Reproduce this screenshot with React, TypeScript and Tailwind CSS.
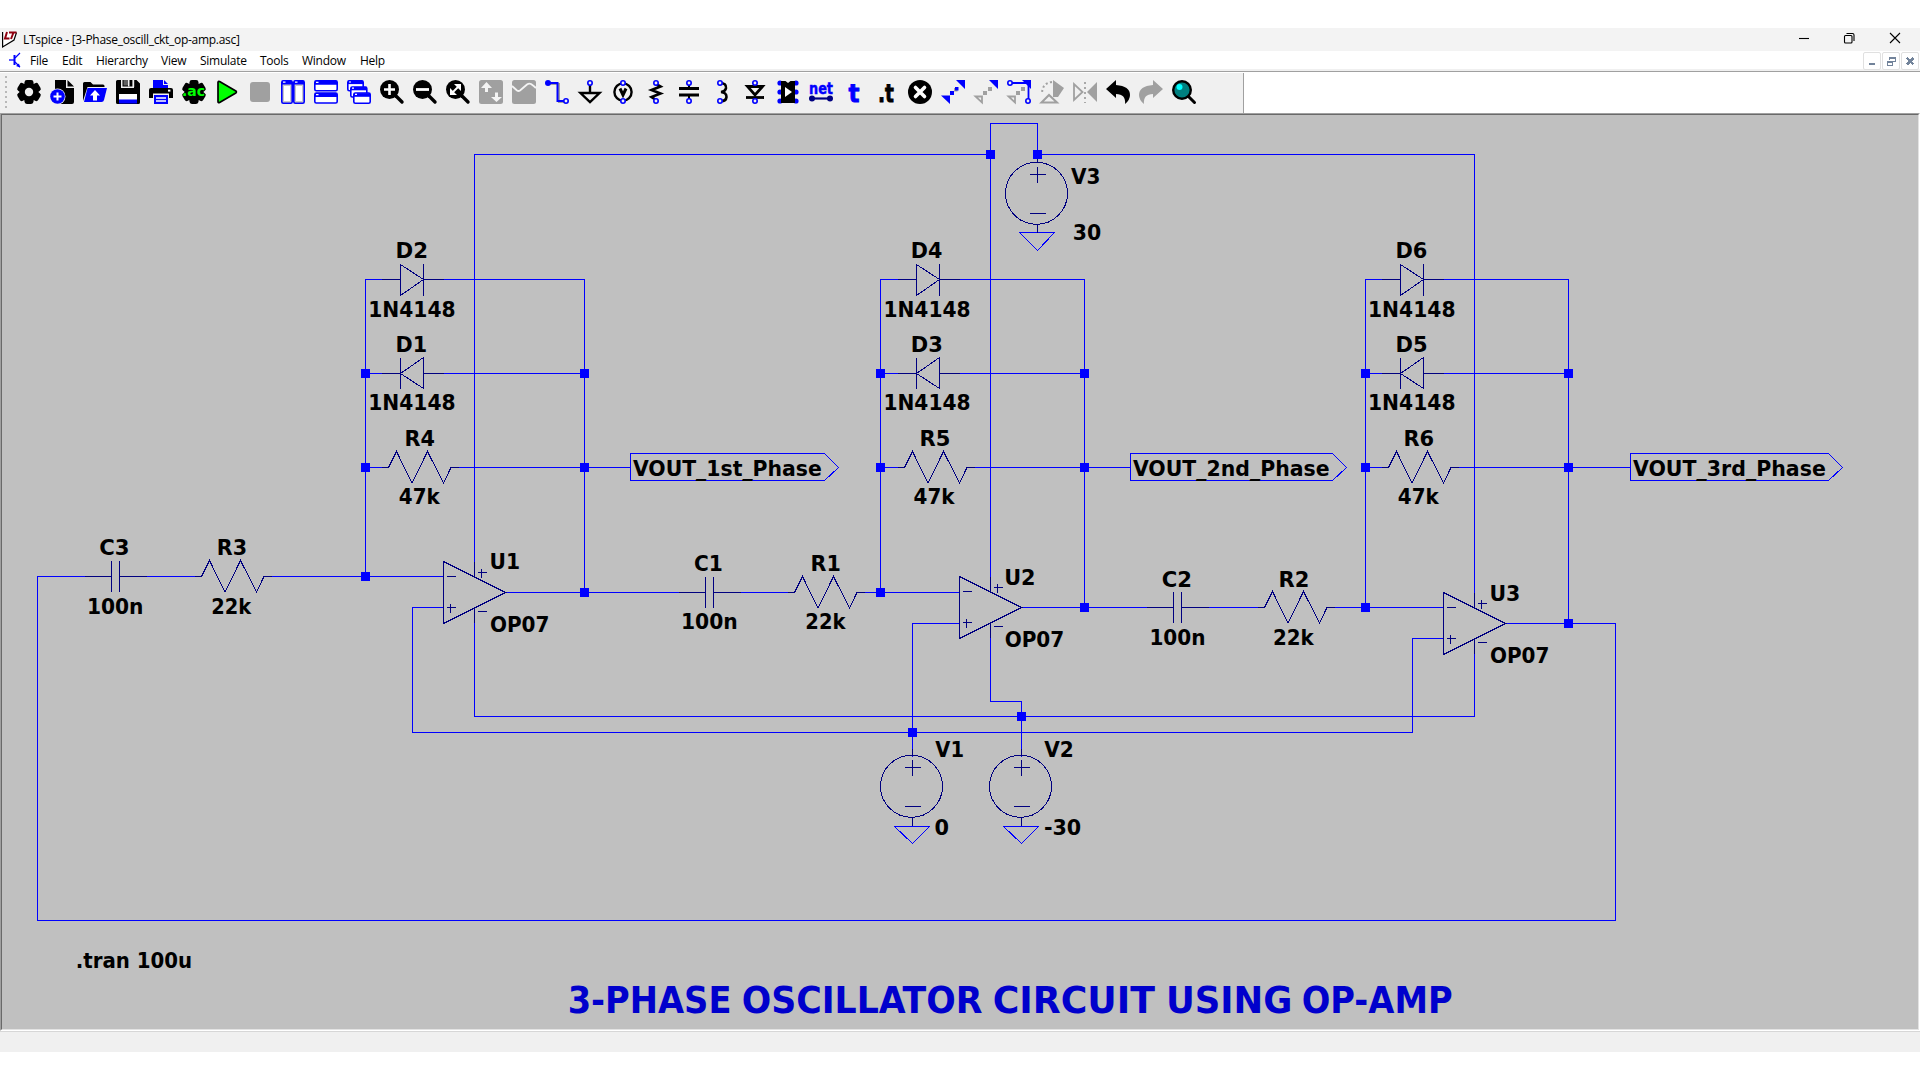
import React from "react";

const WIRE = "#0000ff";
const PART = "#000080";
const GREY = "#a0a0a0";

/* ---------- toolbar icons, each on a 24 x 24 grid ---------- */

const Gear = ({ hole = true }: { hole?: boolean }) => (
  <g>
    <g fill="#000">
      <circle cx="12" cy="12" r="9.6" />
      {[0, 60, 120].map((a) => (
        <rect key={a} x="7.5" y="0" width="9" height="24" rx="2.4" transform={`rotate(${a} 12 12)`} />
      ))}
    </g>
    {hole && <circle cx="12" cy="12" r="4.2" fill="#f0f0f0" />}
  </g>
);

const Lens = ({ children }: { children?: React.ReactNode }) => (
  <g>
    <path d="M16 16 L22 22" stroke="#000" strokeWidth="3.4" strokeLinecap="round" />
    <circle cx="9.5" cy="9.5" r="9.5" fill="#000" />
    {children}
  </g>
);

const Pin = ({ x, y }: { x: number; y: number }) => (
  <circle cx={x} cy={y} r="2.2" fill="#f0f0f0" stroke="#0000ff" strokeWidth="1.6" />
);

const icons: React.ReactNode[] = [
  <Gear />,
  <g>
    <path d="M5 0 H16 V8 H24 V22 Q24 24 22 24 H5 Z" fill="#000" />
    <path d="M17.5 0 L24 6.5 H17.5 Z" fill="#000" />
    <circle cx="7.5" cy="16.5" r="8" fill="#f0f0f0" />
    <circle cx="7.5" cy="16.5" r="7.3" fill="#0000ff" />
    <path d="M7.5 12.5 V20.5 M3.5 16.5 H11.5" stroke="#fff" strokeWidth="2" />
  </g>,
  <g>
    <path d="M0 21 V3.5 Q0 2 1.5 2 H7.5 L10 4.5 H20 Q21.5 4.5 21.5 6 V7 H4.5 Z" fill="#000" />
    <path d="M4.5 8 H24 L21 20 Q20.6 22 18.5 22 H1 Z" fill="#0000ff" />
    <path d="M12 10 L17 15.5 H14 V20.5 H10 V15.5 H7 Z" fill="#fff" />
  </g>,
  <g>
    <path d="M1.5 0 H5 V8 H18 V0 H20.5 L24 3.5 V22.5 Q24 24 22.5 24 H1.5 Q0 24 0 22.5 V1.5 Q0 0 1.5 0 Z" fill="#000" />
    <path d="M6.5 0 H16.5 V6.5 H6.5 Z" fill="#000" />
    <path d="M7.5 0 H12 V5.5 H7.5 Z" fill="#606060" />
    <rect x="12" y="0" width="1.5" height="6.5" fill="#f0f0f0" />
    <rect x="16.8" y="0" width="1.4" height="7" fill="#f0f0f0" />
    <rect x="3" y="14" width="18" height="6" fill="#fff" />
    <rect x="3" y="19.5" width="18" height="4" fill="#0000ff" />
  </g>,
  <g>
    <path d="M4 0 H14 V5 H19 V8 H4 Z" fill="#0000ff" />
    <path d="M15 0 L19 4 H15 Z" fill="#0000ff" />
    <path d="M2 8 H22 Q24 8 24 10 V18 H0 V10 Q0 8 2 8 Z" fill="#000" />
    <rect x="19" y="9.6" width="2.4" height="2" fill="#fff" />
    <rect x="4" y="13.5" width="16" height="10.5" fill="#f0f0f0" />
    <rect x="5" y="15" width="14" height="9" fill="#0000ff" />
    <path d="M7 18 H17 M7 21 H17" stroke="#fff" strokeWidth="1.3" />
  </g>,
  <g>
    <Gear hole={false} />
    <text x="0" y="16.3" fontSize="14" fontWeight="700" fill="#00ff00" textLength="23" lengthAdjust="spacingAndGlyphs">
      .ac
    </text>
  </g>,
  <path d="M3 2.5 V21.5 Q3 23.2 4.6 22.4 L20.8 13 Q22 12 20.8 11 L4.6 1.6 Q3 .8 3 2.5 Z" fill="#00ff00" stroke="#000" strokeWidth="1.7" />,
  <rect x="2" y="2" width="20" height="20" rx="3" fill={GREY} />,
  <g fill="#c8c8c8" stroke="#0000ff" strokeWidth="1.6">
    <rect x=".8" y=".8" width="10.4" height="22.4" rx="1.5" />
    <rect x="12.8" y=".8" width="10.4" height="22.4" rx="1.5" />
    <path d="M1 2.6 H11 M13 2.6 H23" strokeWidth="3.6" />
    <path d="M2 2.2 H4.5 M14 2.2 H16.5" stroke="#fff" strokeWidth="1.2" />
    <path d="M3 6 H9 V21 H3 Z M15 6 H21 V21 H15 Z" fill="#fff" stroke="none" />
  </g>,
  <g fill="#fff" stroke="#0000ff" strokeWidth="1.6">
    <rect x=".8" y=".8" width="22.4" height="10" rx="1.5" />
    <rect x=".8" y="13" width="22.4" height="10" rx="1.5" />
    <path d="M1 2.8 H23 M1 15 H23" strokeWidth="4" />
    <path d="M2 2.4 H4.5 M2 14.6 H4.5" stroke="#fff" strokeWidth="1.2" />
  </g>,
  <g fill="#fff" stroke="#0000ff" strokeWidth="1.6">
    <rect x=".8" y=".8" width="15.4" height="10" rx="1.5" />
    <path d="M1 2.4 H16" strokeWidth="3.4" />
    <rect x="3.8" y="7" width="16" height="10" rx="1.5" />
    <path d="M4 8.6 H20" strokeWidth="3.4" />
    <rect x="6.8" y="13" width="16.4" height="10.2" rx="1.5" />
    <path d="M7 15 H23" strokeWidth="3.6" />
    <path d="M2 2 H4 M5 8.2 H7 M8 14.4 H10" stroke="#fff" strokeWidth="1.2" />
  </g>,
  <Lens>
    <path d="M9.5 4 V15 M4 9.5 H15" stroke="#fff" strokeWidth="2.6" />
  </Lens>,
  <Lens>
    <path d="M3 9.5 H16" stroke="#fff" strokeWidth="2.8" />
  </Lens>,
  <Lens>
    <path d="M8 4 H15 V11 Z M4 8 V15 H11 Z" fill="#fff" />
    <path d="M6 13 L13 6" stroke="#fff" strokeWidth="2" />
  </Lens>,
  <g>
    <rect width="24" height="24" rx="2.5" fill={GREY} />
    <path d="M7.5 2 L13 8 H9 V12 H6 V8 H2 Z M17.5 22 L12 17 H16 V12.5 H19 V17 H23 Z" fill="#f4f4f4" />
  </g>,
  <g>
    <rect width="24" height="24" rx="2.5" fill={GREY} />
    <path d="M0 6 L5 10.5 Q6.500 11.500 8 10.500 L15 4.500 Q17 3 19 4 Q22 6 24 8" fill="none" stroke="#f4f4f4" strokeWidth="1.8" />
  </g>,
  <g>
    <path d="M3 4 H14 V22 H20" fill="none" stroke={GREY} strokeWidth="2" />
    <path d="M3 3 H12.500 V21 H20" fill="none" stroke="#0000ff" strokeWidth="2" />
    <circle cx="3" cy="3" r="3" fill="#0000ff" />
    <Pin x={21} y={21} />
  </g>,
  <g>
    <path d="M12 5 V13" stroke="#000" strokeWidth="2.4" />
    <path d="M2.500 13 H21.500 L12 22 Z" fill="#f0f0f0" stroke="#000" strokeWidth="2.4" />
    <Pin x={12} y={3} />
  </g>,
  <g>
    <circle cx="12" cy="12" r="8.600" fill="none" stroke="#000" strokeWidth="2.4" />
    <path d="M9 8.500 L12 15 L15 8.500" fill="none" stroke="#000" strokeWidth="3" />
    <Pin x={12} y={3} />
    <Pin x={12} y={21} />
  </g>,
  <g>
    <path d="M12 4 L16.500 6.500 L7.500 10 L16.500 13.500 L7.500 17 L12 20" fill="none" stroke="#000" strokeWidth="2.600" />
    <Pin x={12} y={3} />
    <Pin x={12} y={21} />
  </g>,
  <g>
    <path d="M2 8.500 H22 M2 15 H22" stroke="#000" strokeWidth="2.800" />
    <path d="M12 4 V8 M12 16 V20" stroke="#000" strokeWidth="2" />
    <Pin x={12} y={3} />
    <Pin x={12} y={21} />
  </g>,
  <g>
    <path d="M10 3 Q16.500 3 16 8 Q15.500 11.500 11 12 Q16.500 12.500 16.500 17 Q16 21.500 10 21" fill="none" stroke="#000" strokeWidth="2.600" />
    <Pin x={10} y={3} />
    <Pin x={10} y={21} />
  </g>,
  <g>
    <path d="M4.500 6.500 H19.500 L12 15 Z" fill="#f0f0f0" stroke="#000" strokeWidth="2.800" />
    <path d="M3 17.500 H21" stroke="#000" strokeWidth="2.800" />
    <Pin x={12} y={3} />
    <Pin x={12} y={21} />
  </g>,
  <g>
    <g fill="#0000ff">
      <circle cx="4" cy="3" r="2.600" />
      <circle cx="4" cy="12" r="2.600" />
      <circle cx="4" cy="21" r="2.600" />
      <circle cx="20" cy="3" r="2.600" />
      <circle cx="20" cy="12" r="2.600" />
      <circle cx="20" cy="21" r="2.600" />
    </g>
    <path d="M5 1 H9.500 L12 3 L14.500 1 H19 V23 H5 Z" fill="#000" />
    <path d="M9 7 L16 12 L9 17 Z" fill="#fff" />
  </g>,
  <g>
    <text x="0" y="14" fontSize="16" fontWeight="700" fill="#0000ff" stroke="#0000ff" strokeWidth=".5" textLength="24" lengthAdjust="spacingAndGlyphs">
      net
    </text>
    <path d="M3 18.500 H21" stroke="#000080" strokeWidth="2.200" />
    <circle cx="3" cy="18.500" r="3" fill="#000080" />
    <circle cx="21" cy="18.500" r="3" fill="#000080" />
  </g>,
  <text x="6.500" y="21.500" fontSize="25" fontWeight="700" fill="#0000ff" stroke="#0000ff" strokeWidth=".8" textLength="11" lengthAdjust="spacingAndGlyphs">
    t
  </text>,
  <text x="3" y="21.500" fontSize="25" fontWeight="700" fill="#000" stroke="#000" strokeWidth=".8" textLength="16" lengthAdjust="spacingAndGlyphs">
    .t
  </text>,
  <g>
    <circle cx="12" cy="12" r="12" fill="#000" />
    <path d="M7.500 7.500 L16.500 16.500 M16.500 7.500 L7.500 16.500" stroke="#fff" strokeWidth="3.600" strokeLinecap="round" />
  </g>,
  <g fill="#0000ff">
    <path d="M15 0 H24 V9 Z M0 15.500 H9 V24 Z" />
    <rect x="9" y="11" width="4" height="4" />
    <rect x="13" y="8" width="3.500" height="3.500" fill={GREY} />
    <rect x="14" y="7" width="3.500" height="3.500" />
  </g>,
  <g>
    <path d="M15 0 H24 V9 Z" fill="#0000ff" />
    <path d="M1.500 16.500 H8 V22.500 Z" fill="none" stroke={GREY} strokeWidth="1.800" />
    <path d="M9 11 h4 v4 h-4 Z M14 7 h4 v4 h-4 Z" fill={GREY} />
  </g>,
  <g>
    <path d="M15 0 H24 V9 Z" fill="#0000ff" />
    <path d="M4 3 H20 M21.500 4 V20" stroke="#0000ff" strokeWidth="1.800" />
    <path d="M1.500 16.500 H8 V22.500 Z" fill="none" stroke={GREY} strokeWidth="1.800" />
    <path d="M9 11 h4 v4 h-4 Z M14 7 h4 v4 h-4 Z" fill={GREY} />
    <Pin x={3} y={3} />
    <Pin x={21} y={21} />
  </g>,
  <g>
    <path d="M13 0 L24 8 L18 17 H13 Z" fill={GREY} />
    <path d="M12 2 Q2 3 2 14" fill="none" stroke={GREY} strokeWidth="2" strokeDasharray="2 2.500" />
    <path d="M1.500 22.500 L9 15 L17 22.500 Z" fill="#f0f0f0" stroke={GREY} strokeWidth="2" />
  </g>,
  <g>
    <path d="M1 4 V20 L9.500 12 Z" fill="none" stroke={GREY} strokeWidth="1.800" />
    <path d="M24 2 V22 L14 12 Z" fill={GREY} />
    <path d="M12 2 V23" stroke={GREY} strokeWidth="1.800" strokeDasharray="2 3" />
  </g>,
  <path d="M0 9 L10 0 V5 Q24 6 24 15 Q24 20 19 24 Q20 14 10 14 V18 Z" fill="#000" />,
  <path d="M24 9 L14 0 V5 Q0 6 0 15 Q0 20 5 24 Q4 14 14 14 V18 Z" fill={GREY} />,
  <g>
    <path d="M16 16 L22.500 22.500" stroke="#000" strokeWidth="3" strokeLinecap="round" />
    <circle cx="10" cy="10" r="8.800" fill="#008080" stroke="#000" strokeWidth="2.400" />
    <circle cx="7.500" cy="7" r="3" fill="#00ffff" />
  </g>,
];

/* ---------- schematic ---------- */

// Side bearings of the glyphs that begin or end a label, in em.
const LEFT: Record<string, number> = { D: 0.07, R: 0.07, U: 0.055, C: 0.035, O: 0.035, V: 0.005, S: 0.04, "1": 0.06, "2": 0.045, "3": 0.045, "4": 0.02, "0": 0.04, ".": 0.06, "-": 0.05 };
const RIGHT: Record<string, number> = { "1": 0.05, "2": 0.06, "3": 0.05, "4": 0.03, "5": 0.05, "6": 0.04, "7": 0.05, "8": 0.04, "0": 0.04, k: -0.01, n: 0.07, u: 0.07, e: 0.04, P: 0.03, E: 0.04, G: 0.05 };

type LabelSpec = [string, number, number, number];

const Label = ({ spec, size = 21.6, fill = "#000" }: { spec: LabelSpec; size?: number; fill?: string }) => {
  const [text, left, right, base] = spec;
  const l = (LEFT[text[0]] ?? 0) * size;
  const r = (RIGHT[text[text.length - 1]] ?? 0) * size;
  return (
    <text x={left - l} y={base} fontSize={size} fontWeight="700" fill={fill} textLength={right - left + l + r} lengthAdjust="spacingAndGlyphs">
      {text}
    </text>
  );
};

const labels: LabelSpec[] = [
  ["D2", 397, 426.7, 258],
  ["1N4148", 369.5, 454.7, 317],
  ["D1", 397, 426, 352],
  ["1N4148", 369.5, 454.7, 410],
  ["R4", 406, 434.3, 446],
  ["47k", 399.3, 440, 504],
  ["D4", 912.3, 941.7, 258],
  ["1N4148", 884.7, 969.7, 317],
  ["D3", 912.3, 941.7, 352],
  ["1N4148", 884.7, 969.7, 410],
  ["R5", 921, 949.3, 446],
  ["47k", 914, 954.7, 504],
  ["D6", 1397, 1426.5, 258],
  ["1N4148", 1369.3, 1454.7, 317],
  ["D5", 1397, 1426.5, 352],
  ["1N4148", 1369.3, 1454.7, 410],
  ["R6", 1405, 1433.3, 446],
  ["47k", 1398.3, 1439, 504],
  ["C3", 100, 128.5, 555],
  ["R3", 218.3, 246, 555],
  ["100n", 88.2, 142, 614],
  ["22k", 212.3, 251.5, 614],
  ["C1", 694.7, 721.7, 571],
  ["R1", 812, 839.7, 571],
  ["100n", 682.3, 736.3, 629],
  ["22k", 806.3, 845.7, 629],
  ["C2", 1162.5, 1190.7, 587],
  ["R2", 1280, 1308, 587],
  ["100n", 1150.7, 1204, 645],
  ["22k", 1274, 1314, 645],
  ["U1", 490.7, 519, 569],
  ["OP07", 490.7, 548.4, 632],
  ["U2", 1005.4, 1034.3, 585],
  ["OP07", 1005.4, 1063.2, 647],
  ["U3", 1490.7, 1519.3, 601],
  ["OP07", 1490.7, 1548.3, 663],
  ["V3", 1071, 1099.3, 184],
  ["30", 1073.7, 1100.3, 240],
  ["V1", 935.4, 962.9, 757],
  ["0", 935.4, 948.2, 835],
  ["V2", 1044.3, 1072.5, 757],
  ["-30", 1045, 1080.4, 835],
  ["VOUT_1st_Phase", 633, 821, 476],
  ["VOUT_2nd_Phase", 1133, 1328.7, 476],
  ["VOUT_3rd_Phase", 1633, 1825, 476],
  [".tran 100u", 77, 190.5, 968],
];

const heading: LabelSpec[] = [
  ["3-PHASE", 569.3, 730, 1013],
  ["OSCILLATOR", 743, 982.500, 1013],
  ["CIRCUIT", 994, 1155, 1013],
  ["USING", 1168, 1290.500, 1013],
  ["OP-AMP", 1303, 1451.500, 1013],
];

const wires = [
  "M443 576 H37 V920 H1615 V623 H1505",
  "M365 576 V279 H584 V592",
  "M365 373 H584 M365 467 H630",
  "M505 592 H959 M880 592 V279 H1084 V607",
  "M880 373 H1084 M880 467 H1130",
  "M1021 607 H1443 M1365 607 V279 H1568 V623",
  "M1365 373 H1568 M1365 467 H1630",
  "M474 576 V154 H990 M1037 154 H1474 V607",
  "M990 592 V123 H1037 V154",
  "M474 607 V716 H1474 V638",
  "M443 607 H412 V732 H1412 V638 H1443",
  "M959 623 H912 V756",
  "M990 623 V701 H1021 V756",
  "M1019 232 H1054 L1037 250 Z",
  "M894 826 H929 L912 843 Z",
  "M1003 826 H1038 L1021 843 Z",
  "M630 453 H824 L838 467 L824 480 H630 Z",
  "M1130 453 H1332 L1346 467 L1332 480 H1130 Z",
  "M1630 453 H1828 L1842 467 L1828 480 H1630 Z",
];

const junctions: [number, number][] = [
  [365, 373], [584, 373], [365, 467], [584, 467], [365, 576], [584, 592],
  [880, 373], [1084, 373], [880, 467], [1084, 467], [880, 592], [1084, 607],
  [1365, 373], [1568, 373], [1365, 467], [1568, 467], [1365, 607], [1568, 623],
  [990, 154], [1037, 154], [1021, 716], [912, 732],
];

const Wipe = ({ d }: { d: string }) => <path d={d} stroke="#c0c0c0" />;

const DiodeRight = ({ x, y }: { x: number; y: number }) => (
  <path d={`M${x - 19} ${y} H${x} M${x} ${y - 15} L${x + 23} ${y} L${x} ${y + 16} Z M${x + 23} ${y - 16} V${y + 16} M${x + 23} ${y} H${x + 43}`} />
);
const DiodeLeft = ({ x, y }: { x: number; y: number }) => (
  <path d={`M${x - 19} ${y} H${x} M${x + 23} ${y - 16} L${x} ${y} L${x + 23} ${y + 15} Z M${x} ${y - 16} V${y + 15} M${x + 23} ${y} H${x + 43}`} />
);
const Resistor = ({ x, y }: { x: number; y: number }) => (
  <path d={`M${x - 7} ${y} H${x} L${x + 8} ${y - 16} L${x + 23.5} ${y + 15.5} L${x + 39} ${y - 16} L${x + 55} ${y + 15.5} L${x + 62.5} ${y} H${x + 70}`} />
);
const Capacitor = ({ x, y }: { x: number; y: number }) => (
  <path d={`M${x - 27} ${y} H${x} M${x} ${y - 16} V${y + 15} M${x + 8} ${y - 16} V${y + 15} M${x + 8} ${y} H${x + 35}`} />
);
const OpAmp = ({ x, y }: { x: number; y: number }) => (
  <path
    d={`M${x} ${y - 31} L${x + 62} ${y} L${x} ${y + 31} Z M${x + 31} ${y - 31} V${y - 16} M${x + 31} ${y + 15} V${y + 30}
    M${x + 3} ${y - 16} h9 M${x + 3} ${y + 15} h9 M${x + 7} ${y + 11} v9
    M${x + 34} ${y - 20} h9 M${x + 38} ${y - 24} v9 M${x + 34} ${y + 19} h9`}
  />
);
const Source = ({ x, y }: { x: number; y: number }) => (
  <g>
    <ellipse cx={x - 1} cy={y - 0.2} rx="31" ry="31" />
    <path d={`M${x} ${y - 38} V${y - 31} M${x - 8} ${y - 19} h16 M${x} ${y - 27} v16 M${x - 8} ${y + 20} h16 M${x} ${y + 31} V${y + 39}`} />
  </g>
);

const Schematic = () => (
  <svg viewBox="2 115 1916 914" width="1916" height="914" className="block bg-[#c0c0c0]">
    <g transform="translate(.5 .5)" fill="none" strokeWidth="1" shapeRendering="crispEdges">
      <g stroke={WIRE}>
        {wires.map((d) => (
          <path key={d} d={d} />
        ))}
      </g>
      {/* clear the wire where a component body sits */}
      {[[400, 279], [400, 373], [916, 279], [916, 373], [1400, 279], [1400, 373]].map(([x, y]) => (
        <Wipe key={`${x}-${y}`} d={`M${x} ${y} h24`} />
      ))}
      {[[388, 467], [904, 467], [1388, 467], [201, 576], [794, 592], [1264, 607]].map(([x, y]) => (
        <Wipe key={`${x}-${y}`} d={`M${x} ${y} h63`} />
      ))}
      {[[111, 576], [705, 592], [1173, 607]].map(([x, y]) => (
        <Wipe key={`${x}-${y}`} d={`M${x} ${y} h8`} />
      ))}
      <g stroke={PART}>
        <DiodeRight x={400} y={279} />
        <DiodeLeft x={400} y={373} />
        <DiodeRight x={916} y={279} />
        <DiodeLeft x={916} y={373} />
        <DiodeRight x={1400} y={279} />
        <DiodeLeft x={1400} y={373} />
        <Resistor x={388} y={467} />
        <Resistor x={904} y={467} />
        <Resistor x={1388} y={467} />
        <Resistor x={201} y={576} />
        <Resistor x={794} y={592} />
        <Resistor x={1264} y={607} />
        <Capacitor x={111} y={576} />
        <Capacitor x={705} y={592} />
        <Capacitor x={1173} y={607} />
        <OpAmp x={443} y={592} />
        <OpAmp x={959} y={607} />
        <OpAmp x={1443} y={623} />
        <Source x={1037} y={193} />
        <Source x={912} y={786} />
        <Source x={1021} y={786} />
      </g>
      {junctions.map(([x, y]) => (
        <rect key={`${x}-${y}`} x={x - 4.5} y={y - 4.5} width="9" height="9" fill={WIRE} />
      ))}
    </g>
    <g className="[font-family:'DejaVu_Sans_Condensed','DejaVu_Sans',sans-serif] [font-stretch:condensed]">
      {labels.map((spec, i) => (
        <Label key={i} spec={spec} />
      ))}
      {heading.map((spec) => (
        <Label key={spec[0]} spec={spec} size={36.6} fill="#0000cc" />
      ))}
    </g>
  </svg>
);

/* ---------- window ---------- */

const menus: [string, string][] = [
  ["File", "w-8"],
  ["Edit", "w-[34px]"],
  ["Hierarchy", "w-[65px]"],
  ["View", "w-[39px]"],
  ["Simulate", "w-[60px]"],
  ["Tools", "w-[42px]"],
  ["Window", "w-[58px]"],
  ["Help", "w-8"],
];

const MdiButton = ({ children }: { children: React.ReactNode }) => (
  <div className="flex h-[18px] w-[18px] items-center justify-center rounded-[2px] border border-[#e0e0e0] bg-white">
    <svg width="10" height="10" viewBox="0 0 10 10" fill="none" stroke="#72839a" shapeRendering="crispEdges">
      {children}
    </svg>
  </div>
);

export default function App() {
  return (
    <div className="flex h-[1080px] w-[1920px] flex-col overflow-hidden bg-white pt-7 text-xs text-black [font-family:'Open_Sans','Noto_Sans',sans-serif]">
      <header className="flex h-[23px] shrink-0 items-center bg-[#f3f3f3] pl-0.5">
        <svg width="16" height="18" viewBox="0 0 16 18" className="shrink-0">
          <path d="M.6 1 V16 L12 9 L14.500 1.500" fill="#fff" stroke="#000" strokeWidth="1.200" />
          <path d="M5 1 L3 7.500 H7.500 M7 1.500 H14.500 M11.500 1.500 L9 8" fill="none" stroke="#900010" strokeWidth="2" />
        </svg>
        <span className="ml-[5px] w-[500px] tracking-[-0.29px] whitespace-nowrap">LTspice - [3-Phase_oscill_ckt_op-amp.asc]</span>
        <svg width="106" height="20" viewBox="0 0 106 20" className="mr-[17px] ml-auto" fill="none" stroke="#000" strokeWidth="1.100">
          <path d="M2 8.500 H12" />
          <rect x="47.500" y="5.500" width="7.500" height="7.500" rx="1" />
          <path d="M49.500 3.500 H55.500 Q57 3.500 57 5 V11" />
          <path d="M93 3 L103 13 M103 3 L93 13" />
        </svg>
      </header>

      <nav className="flex h-5 shrink-0 items-start border-b-2 border-[#f0f0f0] bg-white pl-2">
        <svg width="14" height="18" viewBox="0 0 14 18" fill="none" stroke="#0000ff" className="mr-2 shrink-0">
          <path d="M1 9 H6" strokeWidth="1.300" />
          <path d="M6.500 4 V14" strokeWidth="2" />
          <path d="M7 7 L12 2 M7 11 L12 16" strokeWidth="1.200" />
          <path d="M12 16.500 L8 15 L11 12.500 Z" fill="#0000ff" stroke="none" />
        </svg>
        {menus.map(([name, width]) => (
          <span key={name} className={`${width} shrink-0 leading-[19px] tracking-[-0.26px]`}>
            {name}
          </span>
        ))}
        <div className="mt-px mr-px ml-auto flex gap-px">
          <MdiButton>
            <path d="M2 8 H8" strokeWidth="2" />
          </MdiButton>
          <MdiButton>
            <path d="M1 5.500 H6.500 V9.500 H1 Z M3.500 4 V1.500 H9 V5.500 H7" />
            <path d="M1 5.500 H7 M3 1.500 H9" strokeWidth="2" />
          </MdiButton>
          <MdiButton>
            <path d="M2 2 L8.500 8.500 M8.500 2 L2 8.500" strokeWidth="2.400" />
          </MdiButton>
        </div>
      </nav>

      <div className="flex h-[42px] shrink-0 border-t border-[#a0a0a0] bg-white pt-px">
        <div className="flex w-[1244px] items-center border-r border-[#a0a0a0] bg-[#f0f0f0] pb-0.5 pl-[5px]">
          <div className="mr-2.5 flex w-0.5 flex-col gap-[3px]">
            {[0, 1, 2, 3, 4, 5, 6].map((i) => (
              <i key={i} className="block h-0.5 w-0.5 bg-[#b8b8b8]" />
            ))}
          </div>
          <div className="flex gap-[9px] [font-family:'DejaVu_Sans',sans-serif]">
            {icons.map((icon, i) => (
              <svg key={i} width="24" height="24" viewBox="0 0 24 24" className="overflow-visible">
                {icon}
              </svg>
            ))}
          </div>
        </div>
      </div>

      <main className="h-[918px] shrink-0 border-t border-r border-b border-l border-t-[#a0a0a0] border-r-white border-b-white border-l-[#a0a0a0]">
        <div className="h-[916px] border border-t-[#696969] border-r-[#e3e3e3] border-b-[#e3e3e3] border-l-[#696969]">
          <Schematic />
        </div>
      </main>
      <footer className="h-[21px] shrink-0 border-t border-[#d7d7d7] bg-[#f0f0f0]" />
    </div>
  );
}
